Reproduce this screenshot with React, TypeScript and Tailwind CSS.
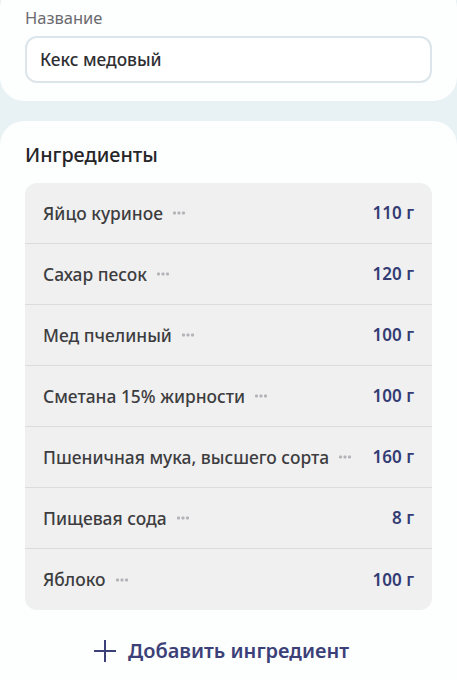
import React from 'react';

interface Ingredient {
  name: string;
  amount: string;
}

const ingredients: Ingredient[] = [
  { name: 'Яйцо куриное', amount: '110 г' },
  { name: 'Сахар песок', amount: '120 г' },
  { name: 'Мед пчелиный', amount: '100 г' },
  { name: 'Сметана 15% жирности', amount: '100 г' },
  { name: 'Пшеничная мука, высшего сорта', amount: '160 г' },
  { name: 'Пищевая сода', amount: '8 г' },
  { name: 'Яблоко', amount: '100 г' },
];

const Dots = () => (
  <svg width="12" height="4" viewBox="0 0 12 4" className="ml-[10px] mt-[1px] shrink-0">
    <rect x="0" y="0.5" width="3" height="3" rx="1" fill="#b3b3b7" />
    <rect x="4.5" y="0.5" width="3" height="3" rx="1" fill="#b3b3b7" />
    <rect x="9" y="0.5" width="3" height="3" rx="1" fill="#b3b3b7" />
  </svg>
);

const IngredientRow: React.FC<{ item: Ingredient; last: boolean }> = ({ item, last }) => (
  <div
    className={`flex h-[61px] items-center justify-between px-[18px] ${
      last ? '' : 'border-b border-[#dcdcdc]'
    }`}
  >
    <div className="flex items-center">
      <span className="text-[17.4px] font-medium text-[#3d3d40]">{item.name}</span>
      <Dots />
    </div>
    <span className="text-[17px] font-semibold text-[#343c74]">{item.amount}</span>
  </div>
);

export default function App() {
  return (
    <div
      className="flex h-[680px] flex-col overflow-hidden bg-[#e8f1f3]"
      style={{ fontFamily: '"Noto Sans", "Open Sans", sans-serif' }}
    >
      {/* Name card */}
      <div className="-mt-4 shrink-0 rounded-[24px] bg-[#fdfefe] px-[25px] pb-[18px] pt-[24px]">
        <p className="text-[16.5px] leading-[20px] text-[#6b6b70]">Название</p>
        <div className="mt-[8px] flex h-[47px] items-center rounded-[12px] border-2 border-[#dce6ea] bg-white px-[13px]">
          <span className="text-[17.3px] font-medium text-[#2f2f33]">Кекс медовый</span>
        </div>
      </div>

      {/* Ingredients card */}
      <div className="mt-[20px] flex-1 rounded-t-[24px] bg-[#fdfefe] px-[25px]">
        <h2 className="pt-[20px] text-[19.8px] font-medium leading-[28px] text-[#252528]">Ингредиенты</h2>
        <div className="mt-[14px] overflow-hidden rounded-[12px] bg-[#f0f0f1]">
          {ingredients.map((item, i) => (
            <IngredientRow key={item.name} item={item} last={i === ingredients.length - 1} />
          ))}
        </div>

        <button className="ml-[68px] mt-[26px] flex items-center gap-[11px] text-[20px] font-semibold leading-[30px] text-[#3b4178]">
          <svg width="24" height="24" viewBox="0 0 24 24" fill="none" stroke="currentColor" strokeWidth="2">
            <path d="M12 1v22M1 12h22" />
          </svg>
          Добавить ингредиент
        </button>
      </div>
    </div>
  );
}
